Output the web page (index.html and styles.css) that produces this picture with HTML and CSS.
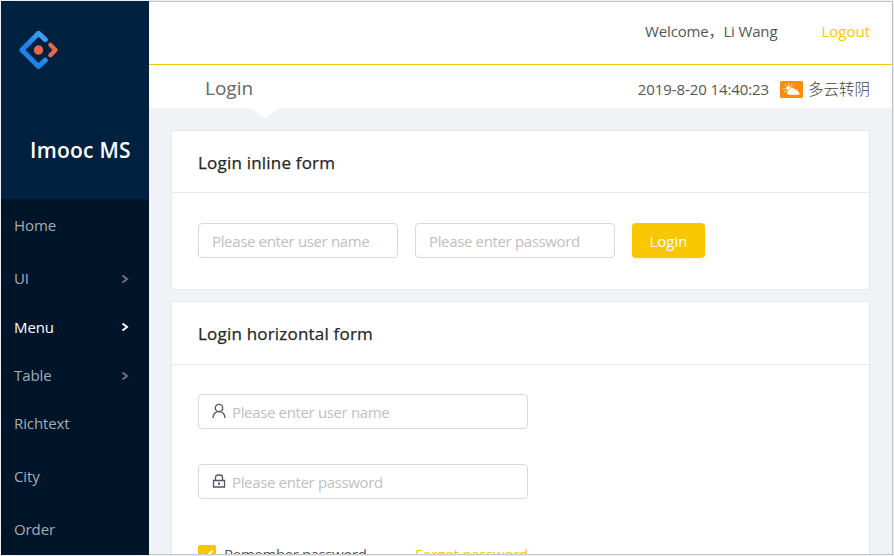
FILE: index.html
```html
<!DOCTYPE html>
<html lang="en">
<head>
<meta charset="utf-8">
<title>Imooc MS</title>
<link rel="stylesheet" href="styles.css">
</head>
<body>
<div class="app">
  <aside class="sidebar">
    <div class="brand">
      <svg class="logo" viewBox="0 0 40 40" width="40" height="40">
        <defs><linearGradient id="blue" x1="0" y1="1" x2="1" y2="0"><stop offset=".45" stop-color="#1b84ec"/><stop offset="1" stop-color="#45a6ee"/></linearGradient></defs>
        <path d="M26.3 9.6 19.5 3.3 2.9 20l16.6 16.5 6.8-6.3" fill="none" stroke="url(#blue)" stroke-width="5" stroke-linecap="round" stroke-linejoin="round"/>
        <path d="m31.4 14.8 5.1 5.2-5.1 5.2" fill="none" stroke="#e2694b" stroke-width="4.4" stroke-linecap="round" stroke-linejoin="round"/>
        <circle cx="19.5" cy="20" r="4.7" fill="#e2694b"/>
      </svg>
      <h1 class="brand-name">Imooc MS</h1>
    </div>
    <nav class="menu">
      <a class="item">Home</a>
      <a class="item sub"><span>UI</span><svg class="arrow" viewBox="0 0 8 10"><path d="m1.500 1.500 4.500 3.500-4.500 3.500"/></svg></a>
      <a class="item sub active"><span>Menu</span><svg class="arrow" viewBox="0 0 8 10"><path d="m1.500 1.500 4.500 3.500-4.500 3.500"/></svg></a>
      <a class="item sub"><span>Table</span><svg class="arrow" viewBox="0 0 8 10"><path d="m1.500 1.500 4.500 3.500-4.500 3.500"/></svg></a>
      <a class="item">Richtext</a>
      <a class="item">City</a>
      <a class="item">Order</a>
    </nav>
  </aside>
  <main class="main">
    <header class="topbar"><span class="welcome">Welcome，Li Wang</span><a class="logout">Logout</a></header>
    <div class="crumbs">
      <div class="crumb">Login</div>
      <span class="date">2019-8-20 14:40:23</span>
      <svg class="weather" viewBox="0 0 23 17" width="23" height="17">
        <rect width="23" height="17" rx="1.5" fill="#f78f0a"/>
        <circle cx="8.6" cy="7.3" r="2.5" fill="#fff3d6"/>
        <path d="M8.6 2.2v1.5M3.3 7.5h1.6M4.8 3.6l1.1 1.1M12.4 3.6l-1.1 1.1M4.7 11l1.1-1" stroke="#fff3d6" stroke-width="1.2"/>
        <path d="M9 14a2.600 2.600 0 0 1-.2-5.100 3.400 3.400 0 0 1 6.300-.5 2.600 2.600 0 0 1 3 2.100A1.800 1.800 0 0 1 18.500 14z" fill="#fff" stroke="#f78f0a" stroke-width=".5"/>
      </svg>
      <span class="sky">多云转阴</span>
    </div>
    <div class="content">
      <section class="card first">
        <h2 class="card-head">Login inline form</h2>
        <form class="inline">
          <div class="field">Please enter user name</div>
          <div class="field">Please enter password</div>
          <button class="btn" type="button">Login</button>
        </form>
      </section>
      <section class="card second">
        <h2 class="card-head">Login horizontal form</h2>
        <form class="stacked">
          <div class="field">
            <svg class="icon" viewBox="0 0 16 16"><circle cx="8" cy="5" r="3.700"/><path d="M2 15c.2-3.700 2.500-6.300 6-6.300s5.800 2.600 6 6.300"/></svg>
            <span>Please enter user name</span>
          </div>
          <div class="field">
            <svg class="icon" viewBox="0 0 16 16"><path d="M2.500 7.500h11v6.500h-11zM4.500 7.500V4.500a2.500 2.500 0 0 1 2.500-2.500h2a2.500 2.500 0 0 1 2.500 2.500v3M8 9.500v2.500M7 10.500h2"/></svg>
            <span>Please enter password</span>
          </div>
          <div class="options">
            <span class="check"><svg viewBox="0 0 18 18" width="18" height="18"><path d="m4 9 3.600 3.600L14.500 5.600" fill="none" stroke="#fff" stroke-width="2"/></svg></span>
            <span class="remember">Remember password</span>
            <a class="forgot">Forgot password</a>
          </div>
        </form>
      </section>
    </div>
  </main>
</div>
</body>
</html>
```
FILE: styles.css
```css
* { box-sizing: border-box; }
body {
  margin: 0;
  height: 556px;
  overflow: hidden;
  padding: 1px;
  background: #eceeef;
  color: #555;
  font: 15px/20px "Open Sans", "Noto Sans CJK SC", sans-serif;
  white-space: nowrap;
}
.app { display: flex; height: 554px; overflow: hidden; }
.sidebar { width: 148px; flex: none; background: #001529; }
.brand { height: 198px; background: #002140; padding: 29px 0 0 18px; }
.logo { display: block; }
.brand-name {
  margin: 66px 0 0 11px;
  color: #fff;
  font: 600 21px/28px "Open Sans", sans-serif;
  letter-spacing: .25px;
}
.menu { padding-top: 2px; }
.item {
  display: flex;
  align-items: center;
  justify-content: space-between;
  height: 48px;
  margin-bottom: 5px;
  padding: 0 20px 0 13px;
  color: #a6adb4;
  letter-spacing: -.1px;
}
.sub { height: 48.500px; margin-bottom: 0; }
.sub + .item:not(.sub) { margin-top: -1px; }
.active { color: #fff; }
.arrow { width: 8px; height: 10px; margin-top: 1px; fill: none; stroke: #78698c; stroke-width: 2; }
.active .arrow { stroke: #fff; }
.main {
  flex: 1;
  min-width: 0;
  overflow: hidden;
  background: #f0f2f5;
  border-top: 1px solid #c4c8ca;
  border-right: 1px solid #bfc1c3;
  border-bottom: 1px solid #c4c6c8;
}
.topbar {
  display: flex;
  justify-content: flex-end;
  align-items: center;
  gap: 44px;
  height: 63px;
  padding: 0 22px 4px 0;
  background: #fff;
  border-bottom: 1px solid #f9c700;
}
.welcome { letter-spacing: -.15px; }
.logout, .forgot { color: #f9c700; }
.crumbs {
  display: flex;
  align-items: center;
  height: 43px;
  padding: 5px 22px 0 0;
  background: #fff;
}
.crumb {
  position: relative;
  align-self: stretch;
  width: 232px;
  margin: -5px auto 0 0;
  padding-left: 56px;
  color: #666;
  font-size: 19px;
  line-height: 46px;
}
.crumb::after {
  content: "";
  position: absolute;
  top: 43px;
  left: 102px;
  border: solid transparent;
  border-width: 10px 14px 0;
  border-top-color: #fff;
}
.date { letter-spacing: -.1px; }
.weather { margin: 0 5px 0 11px; }
.sky { font-weight: 300; font-size: 15.500px; color: #444; }
.content { padding: 22px 22px 0; }
.card {
  background: #fff;
  border: 1px solid #e8e8e8;
  border-radius: 2px;
}
.first { height: 160px; margin-bottom: 11px; }
.second { height: 300px; }
.card-head {
  height: 62px;
  margin: 0;
  padding: 0 26px;
  border-bottom: 1px solid #e8e8e8;
  color: #262626;
  font: 500 17px/63px "Open Sans", sans-serif;
  letter-spacing: .2px;
  -webkit-text-stroke: .25px #262626;
}
.second .card-head { height: 63px; }
.inline { display: flex; gap: 17px; padding: 30px 26px; }
.field {
  display: flex;
  align-items: center;
  width: 200px;
  height: 35px;
  padding: 0 13px;
  border: 1px solid #d9d9d9;
  border-radius: 4px;
  color: #bfbfbf;
  letter-spacing: -.35px;
}
.btn {
  width: 73px;
  height: 35px;
  padding: 1px 0 0;
  border: 0;
  border-radius: 4px;
  background: #f9c700;
  box-shadow: 0 2px 0 rgba(0, 0, 0, .04);
  color: #fff;
  font: inherit;
}
.stacked { padding: 29px 26px; }
.stacked .field { width: 330px; margin-bottom: 35px; }
.icon { width: 16px; height: 16px; margin: -1px 5px 0 -1px; fill: none; stroke: #5c4f66; stroke-width: 1.300; }
.options { display: flex; align-items: center; height: 20px; margin-top: 45px; }
.check { width: 18px; height: 18px; border-radius: 2px; background: #f9c700; }
.remember { margin-left: 8px; letter-spacing: -.4px; }
.forgot { margin-left: auto; margin-right: 315px; letter-spacing: -.27px; }
```
